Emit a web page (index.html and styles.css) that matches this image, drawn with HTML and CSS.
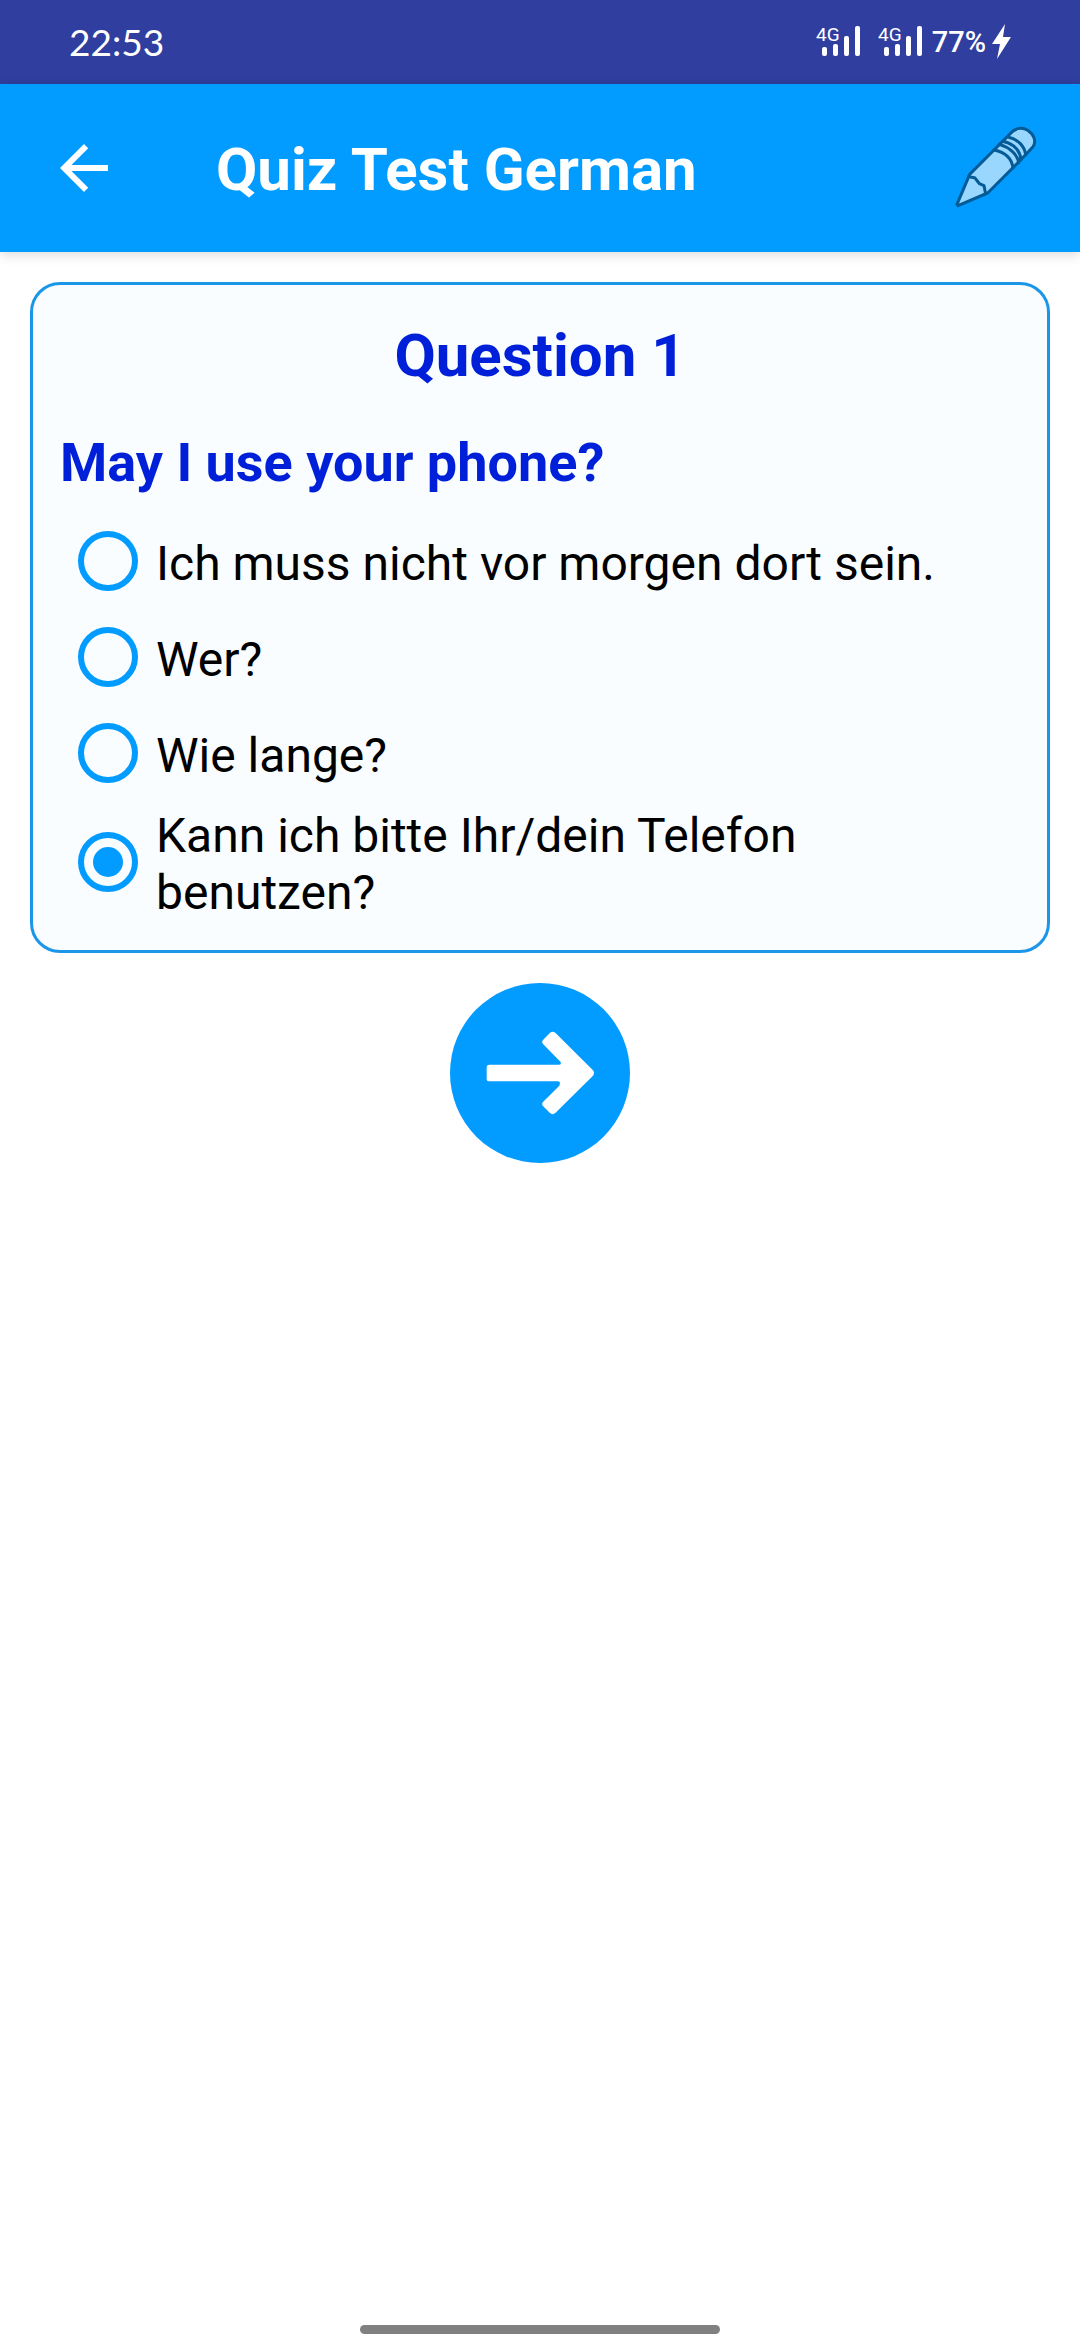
FILE: index.html
```html
<!DOCTYPE html>
<html lang="en">
<head>
<meta charset="utf-8">
<meta name="viewport" content="width=device-width, initial-scale=1">
<title>Quiz Test German</title>
<link rel="stylesheet" href="styles.css">
</head>
<body>
<div class="status-bar">
  <time class="clock">22:53</time>
  <div class="status-icons">
    <svg class="signal" viewBox="0 0 46 36" aria-hidden="true">
      <text class="signal-label" x="0" y="17">4G</text>
      <rect x="6" y="23" width="5" height="9" rx="2"/><rect x="17" y="20" width="5" height="12" rx="2"/><rect x="28" y="12" width="5" height="20" rx="2"/><rect x="39" y="2" width="5" height="30" rx="2"/>
    </svg>
    <svg class="signal" viewBox="0 0 46 36" aria-hidden="true">
      <text class="signal-label" x="0" y="17">4G</text>
      <rect x="6" y="23" width="5" height="9" rx="2"/><rect x="17" y="20" width="5" height="12" rx="2"/><rect x="28" y="12" width="5" height="20" rx="2"/><rect x="39" y="2" width="5" height="30" rx="2"/>
    </svg>
    <div class="battery">
      <span>77%</span>
      <svg class="bolt" viewBox="0 0 20 36" aria-hidden="true"><path d="M13 0 0 20H8L5 35 19 13H11Z"/></svg>
    </div>
  </div>
</div>
<header class="app-bar">
  <button class="icon-button" type="button" aria-label="Back">
    <svg class="back-icon" viewBox="0 0 24 24"><path d="M20 11H7.83l5.59-5.59L12 4l-8 8 8 8 1.41-1.41L7.83 13H20v-2z"/></svg>
  </button>
  <h1 class="title">Quiz Test German</h1>
  <button class="icon-button" type="button" aria-label="Edit">
    <svg class="pencil-icon" viewBox="66 72 264 264">
      <path d="M119 223 192 150 238 104C252 85 274 79 293 91 312 104 320 124 309 140L289 162 248 204 173 279 84 317 81 313Z"/>
      <path class="line" d="M116 230 134 233 142 243 148 251 162 257 166 277"/>
      <path class="band" d="M192 150C222 156 245 173 249 204M208 133C238 142 262 162 266 188M218 124C250 131 270 151 273 180M236 112C266 119 284 140 287 164"/>
    </svg>
  </button>
</header>
<main class="content">
  <form class="card">
    <h2 class="number">Question 1</h2>
    <fieldset class="question">
      <legend class="prompt">May I use your phone?</legend>
      <label class="option"><input class="radio" type="radio" name="answer"><span class="option-text">Ich muss nicht vor morgen dort sein.</span></label>
      <label class="option"><input class="radio" type="radio" name="answer"><span class="option-text">Wer?</span></label>
      <label class="option"><input class="radio" type="radio" name="answer"><span class="option-text">Wie lange?</span></label>
      <label class="option"><input class="radio" type="radio" name="answer" checked><span class="option-text">Kann ich bitte Ihr/dein Telefon benutzen?</span></label>
    </fieldset>
  </form>
  <button class="next" type="button" aria-label="Next question">
    <svg class="next-icon" viewBox="60 72 540 540"><path d="M178 317H386Q395 317 392 309L339 255Q334 249 339 243L360 221Q368 215 376 221L489 334Q495 342 489 350L376 462Q368 469 360 462L339 441Q334 435 339 429L388 380Q393 367 384 367H178Q170 367 170 359V325Q170 317 178 317Z"/></svg>
  </button>
</main>
<div class="home-indicator"></div>
</body>
</html>
```
FILE: styles.css
```css
* {
  box-sizing: border-box;
}

body {
  margin: 0;
  min-height: 100vh;
  display: flex;
  flex-direction: column;
  background: #fff;
  color: #000;
  font-family: Roboto, sans-serif;
}

button {
  padding: 0;
  border: 0;
  background: none;
  cursor: pointer;
}

svg {
  display: block;
}

.status-bar {
  display: flex;
  align-items: center;
  justify-content: space-between;
  height: 84px;
  padding: 0 68px 0 69px;
  background: #303e9f;
  color: #fff;
}

.clock {
  font-family: Lato, sans-serif;
  font-size: 37px;
  line-height: 44px;
}

.status-icons {
  display: flex;
  align-items: center;
  gap: 16px;
}

.signal {
  width: 46px;
  height: 36px;
  fill: #fff;
}

.signal-label {
  font-size: 19px;
}

.battery {
  display: flex;
  align-items: center;
  gap: 6px;
  margin-left: -8px;
  font-size: 29px;
  font-weight: 500;
  line-height: 36px;
}

.bolt {
  width: 20px;
  height: 36px;
  fill: #fff;
}

.app-bar {
  display: flex;
  align-items: center;
  height: 168px;
  padding: 0 40px 0 48px;
  background: #029bff;
  color: #fff;
  box-shadow: 0 2px 12px rgba(0, 0, 0, 0.16);
}

.back-icon {
  width: 72px;
  height: 72px;
  fill: #fff;
}

.title {
  flex: 1;
  margin: 0;
  padding: 4px 0 0 96px;
  font-size: 60px;
  font-weight: 700;
  line-height: 70px;
}

.pencil-icon {
  width: 88px;
  height: 88px;
  fill: #99d7ff;
  stroke: #045b96;
  stroke-width: 9;
  stroke-linejoin: round;
  stroke-linecap: round;
}

.pencil-icon .line,
.pencil-icon .band {
  fill: none;
}

.content {
  display: flex;
  flex-direction: column;
  align-items: center;
  gap: 30px;
  padding: 30px;
}

.card {
  width: 100%;
  padding: 36px 27px 27px;
  border: 3px solid #1c96e8;
  border-radius: 30px;
  background: #f9fdff;
}

.number {
  margin: 0 0 40px;
  color: #001fd8;
  font-size: 60px;
  font-weight: 700;
  line-height: 70px;
  text-align: center;
}

.question {
  margin: 0;
  padding: 0;
  border: 0;
}

.prompt {
  margin-bottom: 18px;
  padding: 0;
  color: #001fd8;
  font-size: 54px;
  font-weight: 700;
  line-height: 64px;
}

.option {
  display: flex;
  align-items: center;
  gap: 18px;
  min-height: 96px;
  padding: 2px 18px;
}

.radio {
  flex: none;
  display: grid;
  place-items: center;
  width: 60px;
  height: 60px;
  margin: 0;
  border: 6px solid #029bff;
  border-radius: 50%;
  appearance: none;
}

.radio:checked::before {
  content: "";
  width: 30px;
  height: 30px;
  border-radius: 50%;
  background: #029bff;
}

.option-text {
  padding-top: 4px;
  font-size: 48px;
  line-height: 57px;
}

.next {
  width: 180px;
  height: 180px;
  border-radius: 50%;
  background: #029bff;
}

.next-icon {
  width: 100%;
  fill: #fff;
}

.home-indicator {
  width: calc(100% / 3);
  height: 9px;
  margin: auto auto 6px;
  border-radius: 5px;
  background: #808080;
}
```
